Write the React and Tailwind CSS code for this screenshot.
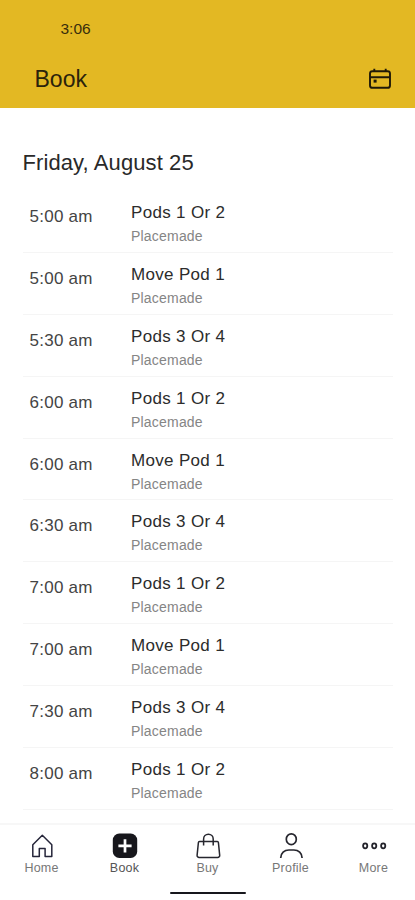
const sessions = [
  { time: "5:00 am", title: "Pods 1 Or 2", location: "Placemade" },
  { time: "5:00 am", title: "Move Pod 1", location: "Placemade" },
  { time: "5:30 am", title: "Pods 3 Or 4", location: "Placemade" },
  { time: "6:00 am", title: "Pods 1 Or 2", location: "Placemade" },
  { time: "6:00 am", title: "Move Pod 1", location: "Placemade" },
  { time: "6:30 am", title: "Pods 3 Or 4", location: "Placemade" },
  { time: "7:00 am", title: "Pods 1 Or 2", location: "Placemade" },
  { time: "7:00 am", title: "Move Pod 1", location: "Placemade" },
  { time: "7:30 am", title: "Pods 3 Or 4", location: "Placemade" },
  { time: "8:00 am", title: "Pods 1 Or 2", location: "Placemade" },
];

const tabs = [
  { label: "Home", icon: HomeIcon },
  { label: "Book", icon: BookIcon },
  { label: "Buy", icon: BagIcon },
  { label: "Profile", icon: ProfileIcon },
  { label: "More", icon: MoreIcon },
];

function CalendarIcon() {
  return (
    <svg width="24" height="22" viewBox="0 0 24 22" fill="none" stroke="#201a08" strokeWidth="1.9">
      <rect x="2" y="3.2" width="20" height="16.6" rx="2.4" />
      <path d="M2 9.2h20M6.3 0.8v2.6M17.7 0.8v2.6" />
      <rect x="5.6" y="11.6" width="3" height="3" fill="#201a08" stroke="none" />
    </svg>
  );
}

function HomeIcon() {
  return (
    <svg width="28" height="28" viewBox="0 0 28 28" fill="none" stroke="#26263a" strokeWidth="1.5" strokeLinejoin="round">
      <path d="M14.3 3.2L4.8 12.7v11.7h6.5v-8h5.8v8h6.7V12.7z" />
    </svg>
  );
}

function BookIcon() {
  return (
    <svg width="28" height="28" viewBox="0 0 28 28" fill="none">
      <rect x="1.8" y="1.6" width="24.4" height="24.4" rx="6.5" fill="#17171c" />
      <path d="M14 7.2v13.2M7.4 13.8h13.2" stroke="#fff" strokeWidth="2.7" />
    </svg>
  );
}

function BagIcon() {
  return (
    <svg width="28" height="28" viewBox="0 0 28 28" fill="none" stroke="#26262e" strokeWidth="1.5" strokeLinejoin="round">
      <path d="M5.5 9.5h17.8q1 0 1.1 1l1.3 12.8a2 2 0 0 1-2 2.2H5.1a2 2 0 0 1-2-2.2l1.3-12.8q.1-1 1.1-1z" />
      <path d="M9.6 13.6V7a4.8 4.8 0 0 1 9.6 0v6.6" />
    </svg>
  );
}

function ProfileIcon() {
  return (
    <svg width="28" height="28" viewBox="0 0 28 28" fill="none" stroke="#26262e" strokeWidth="1.7">
      <ellipse cx="14.3" cy="7.2" rx="5" ry="5.4" />
      <path d="M3.7 26c0-5 3.7-8 8.2-8h5c4.5 0 8.2 3 8.2 8" />
    </svg>
  );
}

function MoreIcon() {
  return (
    <svg width="28" height="28" viewBox="0 0 28 28" fill="none" stroke="#22222a" strokeWidth="1.8">
      <ellipse cx="5.2" cy="13.8" rx="2.1" ry="2.5" />
      <ellipse cx="14.2" cy="13.8" rx="2.1" ry="2.5" />
      <ellipse cx="23.2" cy="13.8" rx="2.1" ry="2.5" />
    </svg>
  );
}

function SessionRow({ session }) {
  return (
    <li className="flex h-[61.9px] border-b border-[#f5f5f5] pl-[7px]">
      <p className="w-[101.5px] pt-[14px] text-[17px] leading-6 tracking-[0.25px] text-[#444]">
        {session.time}
      </p>

      <div className="pt-[10px]">
        <p className="text-[17px] leading-6 tracking-[0.32px] text-[#2c2c2c]">
          {session.title}
        </p>
        <p className="text-[14px] leading-[23px] tracking-[0.2px] text-[#858585]">
          {session.location}
        </p>
      </div>
    </li>
  );
}

export default function App() {
  return (
    <main className="flex h-[900px] w-[415px] flex-col overflow-hidden bg-white font-['Liberation_Sans',Arial,sans-serif]">
      <header className="h-[108px] shrink-0 bg-[#e3b823]">
        <p className="pt-[19px] pl-[60.5px] text-[15.5px] leading-5 text-[#392e0c]">
          3:06
        </p>

        <div className="mt-[24px] flex items-center justify-between pr-[23px] pl-[34.5px]">
          <h1 className="text-[23px] leading-8 text-[#2b230b]">Book</h1>
          <CalendarIcon />
        </div>
      </header>

      <section className="flex-1 overflow-hidden pt-[39px] pr-[22px] pl-[22.5px]">
        <h2 className="h-[44px] text-[22px] leading-8 tracking-[0.1px] text-[#292929]">
          Friday, August 25
        </h2>

        <ul>
          {sessions.map((session, index) => (
            <SessionRow key={index} session={session} />
          ))}
        </ul>
      </section>

      <nav className="h-[77px] shrink-0 border-t-2 border-[#f7f7f7] bg-white">
        <div className="grid grid-cols-5 pt-[7px]">
          {tabs.map(({ label, icon: Icon }) => (
            <button key={label} className="flex flex-col items-center">
              <Icon />
              <span
                className={
                  label === "Book"
                    ? "text-[12.5px] leading-4 tracking-[0.2px] text-[#555]"
                    : "text-[12.5px] leading-4 tracking-[0.2px] text-[#777]"
                }
              >
                {label}
              </span>
            </button>
          ))}
        </div>

        <div className="mx-auto mt-[16px] h-[2px] w-[76px] rounded-full bg-[#17171c]" />
      </nav>
    </main>
  );
}
